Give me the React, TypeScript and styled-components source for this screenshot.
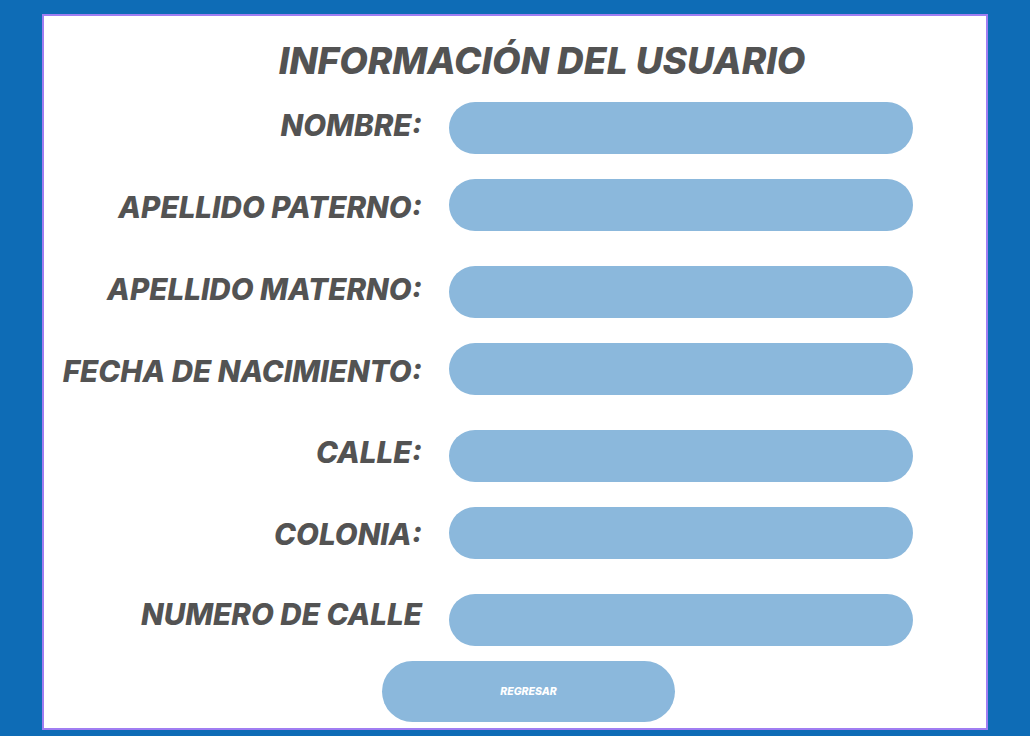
import * as React from 'react'
import styled, { createGlobalStyle } from 'styled-components'

const GlobalStyle = createGlobalStyle`
  html, body {
    margin: 0;
    padding: 0;
    background: #0e6cb6;
  }
  body {
    font-family: Inter, "Liberation Sans", sans-serif;
  }
`

const Page = styled.div`
  padding: 14px 42px 6px;
  min-height: 736px;
  box-sizing: border-box;
`

const Card = styled.div`
  width: 946px;
  height: 716px;
  box-sizing: border-box;
  background: #fff;
  border: 2px solid #a07ef2;
  display: flex;
  flex-direction: column;
  align-items: stretch;
`

const Title = styled.h1`
  margin: 23px 0 0;
  padding-left: 54px;
  text-align: center;
  font-size: 37px;
  line-height: 44px;
  font-weight: 800;
  font-style: italic;
  color: #535353;
`

const Form = styled.div`
  display: flex;
  flex-direction: column;
  margin-top: 19px;
`

const Row = styled.div<{ $top: number }>`
  display: grid;
  grid-template-columns: 378px 464px;
  column-gap: 27px;
  align-items: center;
  margin-top: ${({ $top }) => $top}px;
`

const Label = styled.label<{ $shift: number }>`
  text-align: right;
  font-size: 29.6px;
  font-weight: 800;
  font-style: italic;
  color: #535353;
  white-space: nowrap;
  position: relative;
  top: ${({ $shift }) => $shift}px;
`

const Field = styled.div`
  height: 52px;
  border-radius: 26px;
  background: #8bb8dc;
`

const BackButton = styled.button`
  align-self: flex-start;
  margin: 15px 0 0 338px;
  width: 293px;
  height: 61px;
  border: none;
  border-radius: 31px;
  background: #8bb8dc;
  color: #fff;
  font-family: Inter, "Liberation Sans", sans-serif;
  font-size: 10.5px;
  font-weight: 800;
  font-style: italic;
  cursor: pointer;
`

const fields = [
  { label: 'NOMBRE:', top: 0, shift: -3 },
  { label: 'APELLIDO PATERNO:', top: 25, shift: 2 },
  { label: 'APELLIDO MATERNO:', top: 35, shift: -3 },
  { label: 'FECHA DE NACIMIENTO:', top: 25, shift: 2 },
  { label: 'CALLE:', top: 35, shift: -4 },
  { label: 'COLONIA:', top: 25, shift: 1 },
  { label: 'NUMERO DE CALLE', top: 35, shift: -6 },
]

const App = () => {
  return (
    <>
      <GlobalStyle />
      <Page>
        <Card>
          <Title>INFORMACIÓN DEL USUARIO</Title>
          <Form>
            {fields.map((f) => (
              <Row key={f.label} $top={f.top}>
                <Label $shift={f.shift}>{f.label}</Label>
                <Field />
              </Row>
            ))}
          </Form>
          <BackButton>REGRESAR</BackButton>
        </Card>
      </Page>
    </>
  )
}

export default App
